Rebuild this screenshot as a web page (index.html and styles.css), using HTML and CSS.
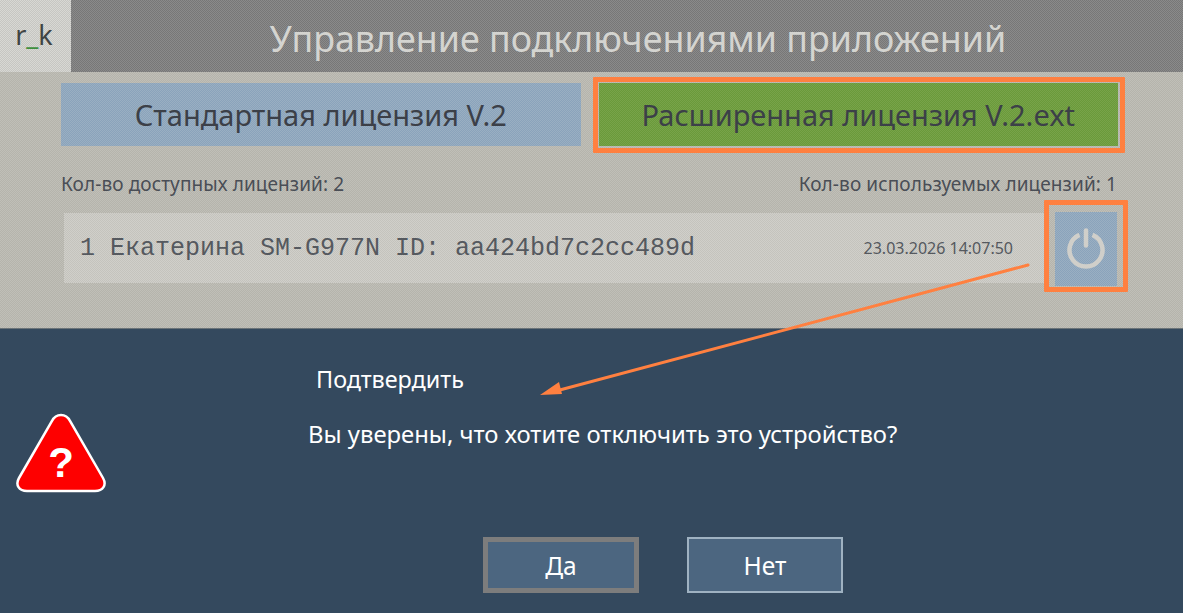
FILE: index.html
```html
<!DOCTYPE html>
<html lang="ru">
<head>
<meta charset="utf-8">
<title>Управление подключениями приложений</title>
<link rel="stylesheet" href="styles.css">
</head>
<body>
<div class="page">
  <section class="app">
    <header class="topbar">
      <div class="logo">r<span class="logo-us">_</span>k</div>
      <h1 class="title">Управление подключениями приложений</h1>
    </header>
    <div class="tabs">
      <div class="tab tab-std">Стандартная лицензия V.2</div>
      <div class="tab tab-ext">Расширенная лицензия V.2.ext</div>
    </div>
    <div class="counts">
      <span>Кол-во доступных лицензий: 2</span>
      <span>Кол-во используемых лицензий: 1</span>
    </div>
    <div class="device-row">
      <div class="device">
        <span class="device-name">1 Екатерина SM-G977N ID: aa424bd7c2cc489d</span>
        <span class="device-date">23.03.2026 14:07:50</span>
      </div>
      <button class="power" aria-label="Отключить">
        <svg class="power-icon" width="40" height="40" viewBox="0 0 40 40" fill="none" stroke="#d0cfca" stroke-width="4.5" stroke-linecap="round">
          <path d="M13.5 5.9A16.5 16.5 0 1 0 26.5 5.9" stroke-linecap="butt"/>
          <path d="M20 1.5V16.5"/>
        </svg>
      </button>
    </div>
  </section>
  <section class="dialog">
    <svg class="warn" width="92" height="82" viewBox="0 0 92 82">
      <path d="M46 3c-4 0-7 2-9 6L4 66c-4 7 0 13 8 13h68c8 0 12-6 8-13L55 9c-2-4-5-6-9-6z" fill="#fe0000" stroke="#fff" stroke-width="2.5"/>
      <text x="46" y="65" text-anchor="middle" class="warn-q">?</text>
    </svg>
    <div class="dialog-title">Подтвердить</div>
    <div class="dialog-msg">Вы уверены, что хотите отключить это устройство?</div>
    <div class="dialog-btns">
      <button class="btn btn-focus">Да</button>
      <button class="btn">Нет</button>
    </div>
  </section>
  <div class="mark mark-ext"></div>
  <div class="mark mark-power"></div>
  <svg class="arrow" width="1183" height="613" viewBox="0 0 1183 613">
    <path d="M1028 265L556 391" stroke="#ff8040" stroke-width="3" stroke-linecap="round"/>
    <path d="M540 395L559 382L562 394z" fill="#ff8040"/>
  </svg>
</div>
</body>
</html>
```
FILE: styles.css
```css
* { box-sizing: border-box; }
html, body { margin: 0; padding: 0; }
body { width: 1183px; height: 613px; overflow: hidden; font-family: "Noto Sans", "Open Sans", sans-serif; }
.page { position: relative; width: 1183px; height: 613px; display: flex; flex-direction: column; }

.app {
  height: 329px;
  background: repeating-conic-gradient(#b5b4ac 0 25%, #c0bfb8 0 50%) 0 0 / 2px 2px;
  border-bottom: 1px solid #6b7378;
}
.topbar { display: flex; height: 72px; }
.logo {
  width: 71px;
  display: flex; align-items: center; justify-content: center;
  background: repeating-conic-gradient(#c6c6c2 0 25%, #d8d8d4 0 50%) 0 0 / 2px 2px;
  color: #404444;
  font-size: 27px;
  padding: 0 3px 4px 0;
}
.logo-us { color: #3f8f3f; }
.title {
  flex: 1; margin: 0;
  display: flex; align-items: center; justify-content: center;
  padding-left: 22px; padding-top: 3px;
  background: repeating-conic-gradient(#777 0 25%, #8a8a8a 0 50%) 0 0 / 2px 2px;
  color: #d4d4d0;
  font-size: 35.8px; font-weight: 400;
}
.tabs { display: flex; gap: 18px; padding: 11px 65px 0 61px; }
.tab {
  flex: 1; height: 63px;
  display: flex; align-items: center; justify-content: center;
  color: #3c4048;
  font-size: 29px;
}
.tab-std { background: repeating-conic-gradient(#8aa3bb 0 25%, #9aafc2 0 50%) 0 0 / 2px 2px; }
.tab-ext { background: repeating-conic-gradient(#6a9a3a 0 25%, #78a34a 0 50%) 0 0 / 2px 2px; }
.counts {
  display: flex; justify-content: space-between;
  padding: 26px 66px 0 61px;
  font-size: 19px; line-height: 24px; letter-spacing: 0.1px;
  color: #4a4e56;
}
.device-row { display: flex; align-items: flex-start; padding: 16px 66px 0 64px; gap: 10px; }
.device {
  flex: 1; height: 70px; margin-top: 1px;
  display: flex; align-items: center; justify-content: space-between;
  padding: 0 32px 0 16px;
  background: repeating-conic-gradient(#c4c3bd 0 25%, #d0cfca 0 50%) 0 0 / 2px 2px;
  color: #55595f;
}
.device-name { font-family: "Liberation Mono", monospace; font-size: 25px; }
.device-date { font-size: 16px; }
.power {
  width: 62px; height: 74px; padding: 0; border: 0;
  display: flex; align-items: center; justify-content: center;
  background: repeating-conic-gradient(#8aa3bb 0 25%, #9aafc2 0 50%) 0 0 / 2px 2px;
}
.power-icon { overflow: visible; }

.dialog { position: relative; flex: 1; background: #34495e; color: #fff; display: flex; flex-direction: column; }
.warn { position: absolute; left: 15px; top: 83px; }
.warn-q { font-family: "Liberation Sans", sans-serif; font-weight: 700; font-size: 42px; fill: #fff; }
.dialog-title { font-size: 23.4px; line-height: 30px; margin: 35px 0 0 316px; }
.dialog-msg { font-size: 23.85px; line-height: 30px; margin: 25px 0 0 308px; }
.dialog-btns { display: flex; gap: 48px; margin: 88px 0 0 483px; }
.btn {
  width: 156px; height: 56px;
  background: #4c6680; color: #fff;
  border: 2px solid #9fb2c2;
  font: 24.5px "Noto Sans", sans-serif;
}
.btn-focus { border: 5px solid #7d7d7d; }

.mark { position: absolute; border: 5px solid #ff8040; border-radius: 1px; }
.mark-ext { left: 593px; top: 77px; width: 532px; height: 76px; }
.mark-power { left: 1044px; top: 200px; width: 84px; height: 92px; }
.arrow { position: absolute; left: 0; top: 0; pointer-events: none; }
```
